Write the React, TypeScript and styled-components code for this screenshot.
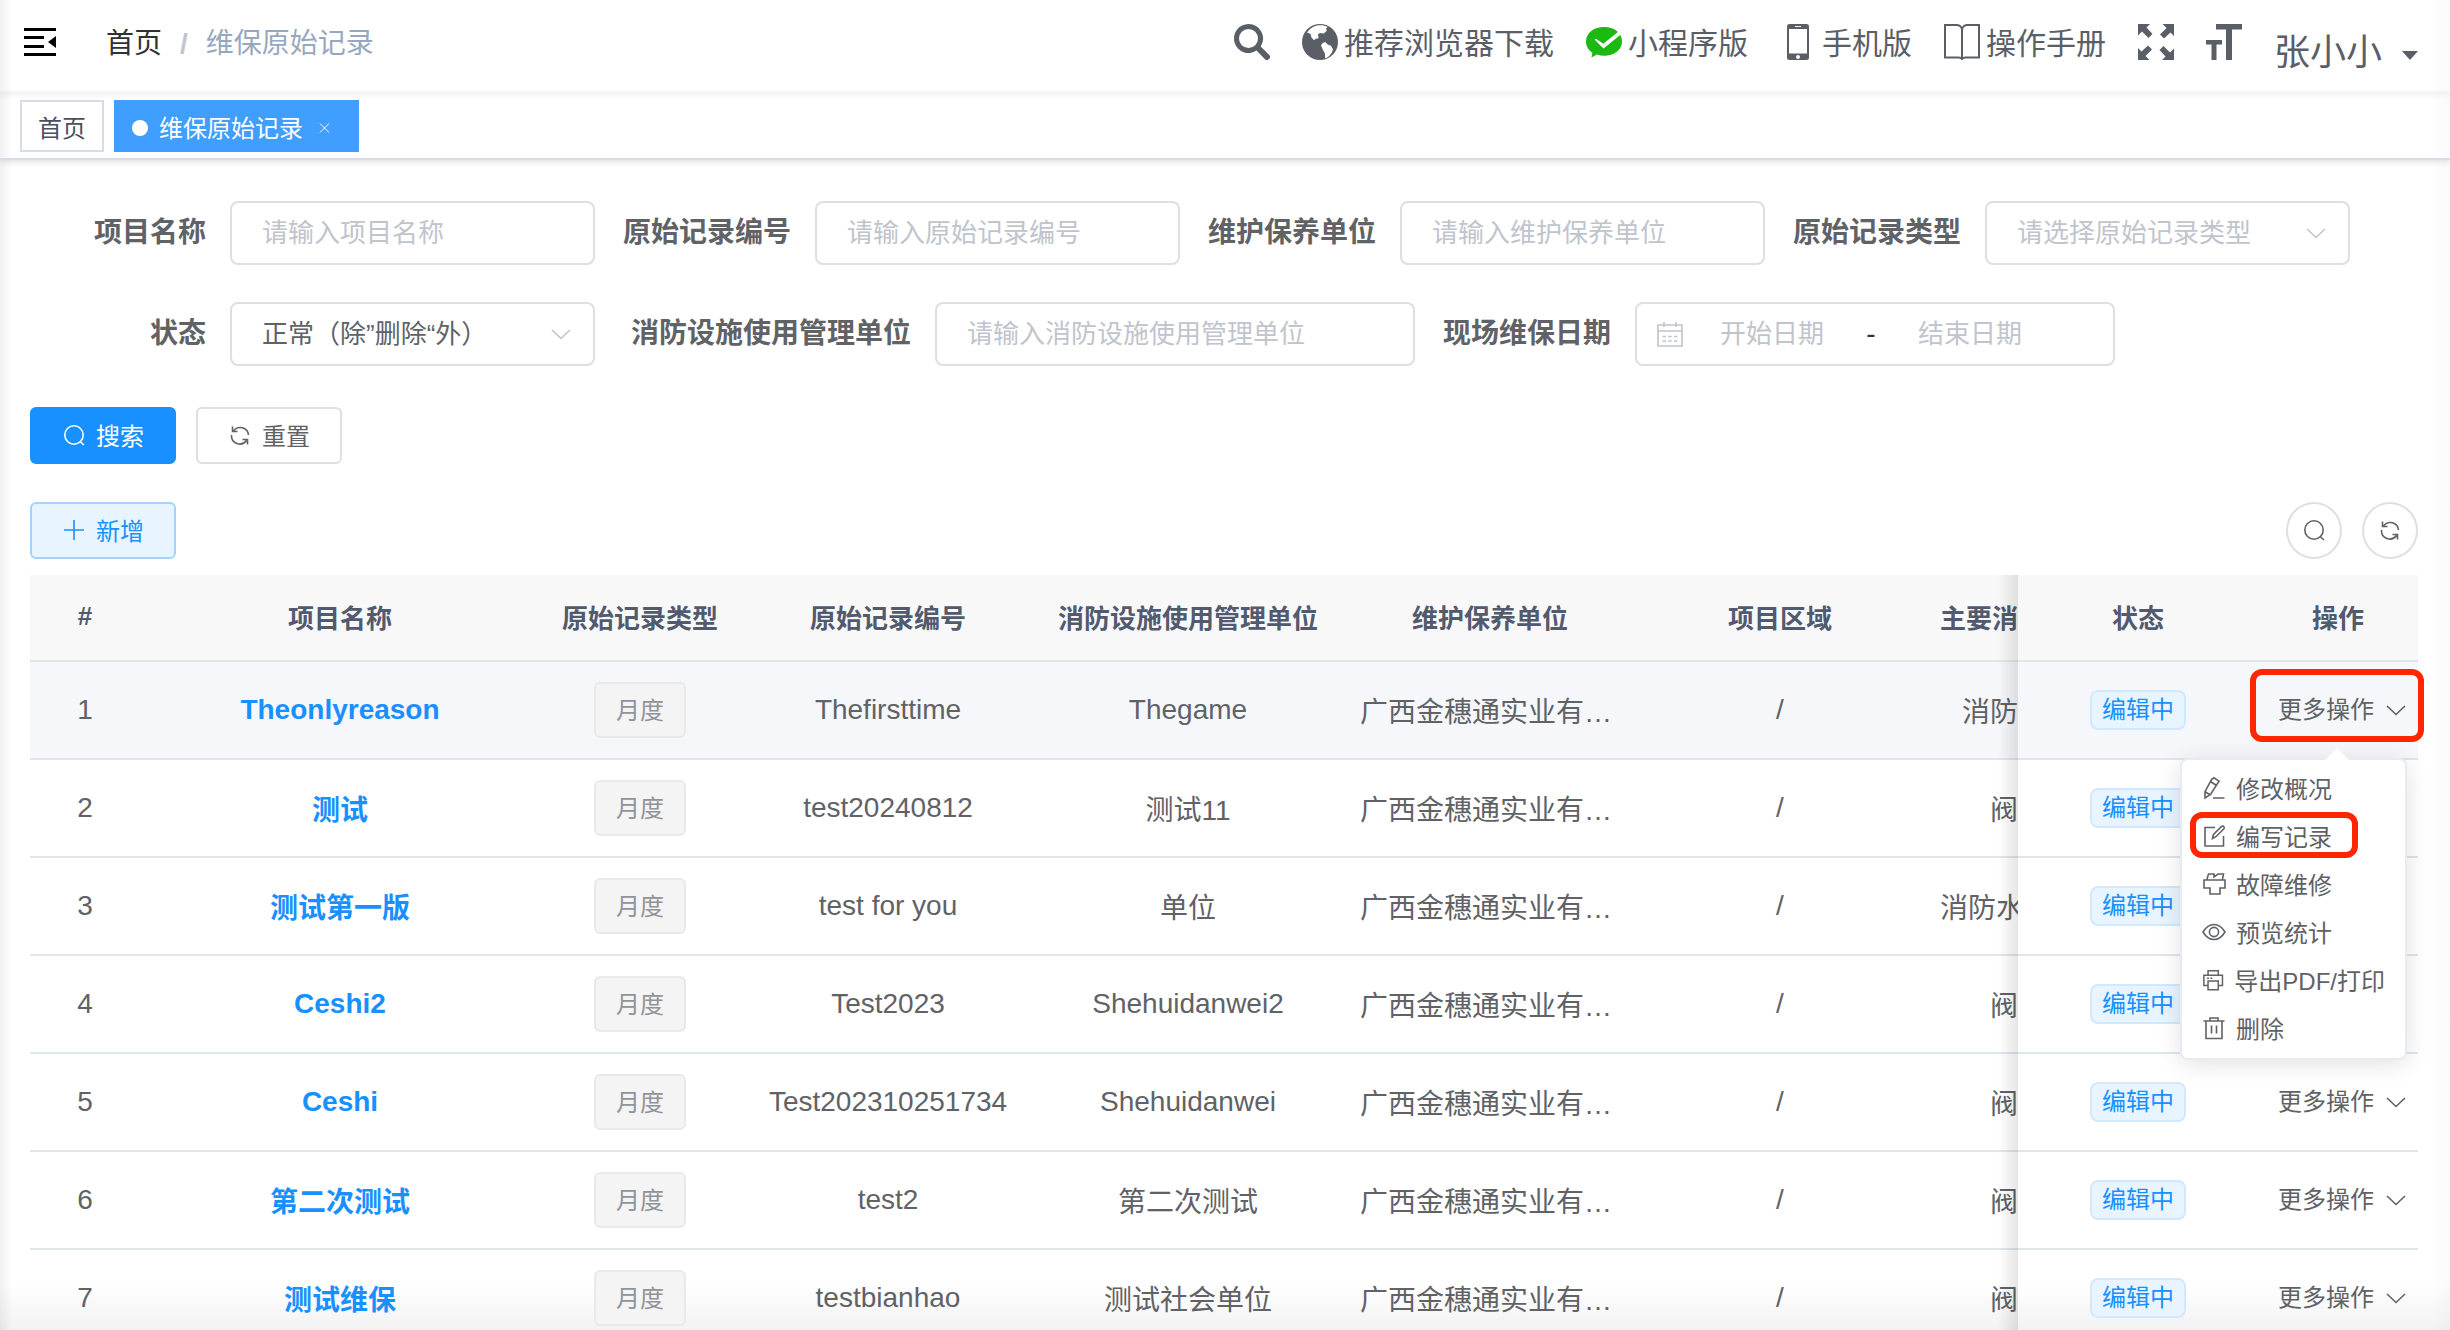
import React from 'react';
import styled, { createGlobalStyle, css } from 'styled-components';

const FONT = '"Liberation Sans", "Noto Sans CJK SC", sans-serif';

const GlobalStyle = createGlobalStyle`
  *, *::before, *::after { box-sizing: border-box; }
  body { margin: 0; background: #fff; color: #606266; font-family: ${FONT}; }
  button, input, select { font-family: inherit; margin: 0; }
`;

const Page = styled.div`
  height: 100vh;
  overflow: hidden;
  background:
    linear-gradient(to right, rgba(0, 0, 0, 0.06), rgba(0, 0, 0, 0) 12px),
    linear-gradient(to left, rgba(0, 0, 0, 0.02), rgba(0, 0, 0, 0) 20px),
    linear-gradient(to top, rgba(0, 0, 0, 0.05), rgba(0, 0, 0, 0) 48px),
    #fff;
`;

const Header = styled.header`
  display: flex;
  justify-content: space-between;
  height: 92px;
  padding: 0 32px 0 24px;
  box-shadow: 0 2px 8px rgba(0, 21, 41, 0.08);
`;

const HeaderLeft = styled.div`
  display: flex;
  align-items: center;
  gap: 50px;
  height: 84px;
`;

const IconButton = styled.button`
  display: flex;
  padding: 0;
  border: 0;
  background: none;
  color: inherit;
  cursor: pointer;
`;

const Breadcrumb = styled.nav`
  display: flex;
  gap: 18px;
  padding-top: 3px;
  font-size: 28px;
  line-height: 40px;
  color: #97a8be;
`;

const CrumbLink = styled.a`
  color: #303133;
  text-decoration: none;
`;

const CrumbDivider = styled.span`
  color: #c0c4cc;
  font-weight: 700;
`;

const HeaderRight = styled.div`
  display: flex;
  align-items: center;
  gap: 32px;
  height: 84px;
  color: #5a5e66;
`;

const HeaderLink = styled.a`
  display: flex;
  align-items: center;
  gap: 6px;
  font-size: 30px;
  line-height: 44px;
  color: inherit;
  text-decoration: none;
`;

const HeaderText = styled.span`
  padding-top: 4px;
`;

const UserMenu = styled.button`
  display: flex;
  align-items: center;
  gap: 20px;
  padding: 22px 0 0;
  border: 0;
  background: none;
  color: inherit;
  font-size: 36px;
  line-height: 40px;
  cursor: pointer;
`;

const Caret = styled.span`
  margin-top: 4px;
  border: 8px solid transparent;
  border-top: 9px solid #5a5e66;
  border-bottom: 0;
`;

const TagBar = styled.nav`
  display: flex;
  gap: 10px;
  height: 68px;
  padding: 8px 20px 0;
  border-bottom: 2px solid #d8dce5;
  box-shadow: 0 2px 6px rgba(0, 0, 0, 0.12);
`;

const PageTag = styled.a<{ $active?: boolean }>`
  display: flex;
  align-items: center;
  height: 52px;
  padding: 0 16px;
  border: 2px solid #d8dce5;
  font-size: 24px;
  color: #495060;
  text-decoration: none;
  ${(p) =>
    p.$active &&
    css`
      padding-right: 24px;
      border-color: #409eff;
      background: #409eff;
      color: #fff;
    `}
`;

const TagDot = styled.span`
  width: 16px;
  height: 16px;
  margin: 4px 11px 0 0;
  border-radius: 50%;
  background: #fff;
`;

const TagClose = styled.span`
  display: flex;
  margin: 4px 0 0 14px;
`;

const Content = styled.main`
  padding: 41px 32px 0 30px;
`;

const FormRow = styled.div`
  display: flex;
  gap: 28px;
  margin-bottom: 37px;
`;

const Field = styled.div`
  display: flex;
  align-items: center;
`;

const Label = styled.label<{ $min?: number }>`
  min-width: ${(p) => p.$min ?? 0}px;
  padding-right: 24px;
  text-align: right;
  font-size: 28px;
  line-height: 64px;
  font-weight: 700;
  white-space: nowrap;
`;

const boxStyle = css`
  height: 64px;
  border: 2px solid #dcdfe6;
  border-radius: 8px;
  background: #fff;
  font-size: 26px;
  color: #606266;
`;

const TextInput = styled.input<{ $wide?: boolean }>`
  ${boxStyle}
  width: ${(p) => (p.$wide ? '480px' : '365px')};
  padding: 0 30px;
  outline: none;
  &::placeholder { color: #c0c4cc; opacity: 1; }
`;

const SelectWrap = styled.div`
  display: grid;
  align-items: center;
  width: 365px;
  color: #c0c4cc;
  & > * { grid-area: 1 / 1; }
  & > svg { justify-self: end; margin-right: 22px; pointer-events: none; }
`;

const SelectBox = styled.select<{ $empty?: boolean }>`
  ${boxStyle}
  width: 100%;
  padding: 0 30px;
  appearance: none;
  color: ${(p) => (p.$empty ? '#c0c4cc' : '#606266')};
`;

const DateRange = styled.div`
  ${boxStyle}
  display: flex;
  align-items: center;
  width: 480px;
  padding: 0 20px;
  & > svg { margin-right: 4px; color: #c0c4cc; }
`;

const DateInput = styled.input`
  width: 170px;
  padding: 0;
  border: 0;
  outline: none;
  background: none;
  text-align: center;
  font-size: 26px;
  &::placeholder { color: #c0c4cc; opacity: 1; }
`;

const DateDash = styled.span`
  width: 28px;
  text-align: center;
  font-size: 28px;
  color: #303133;
`;

const ButtonRow = styled.div`
  display: flex;
  gap: 20px;
  padding-top: 4px;
`;

const Toolbar = styled.div`
  display: flex;
  justify-content: space-between;
  margin: 38px 0 16px;
`;

const ToolGroup = styled.div`
  display: flex;
  gap: 20px;
`;

const tones = {
  primary: css`background: #1890ff; border-color: #1890ff; color: #fff;`,
  plain: css`background: #fff; border-color: #dcdfe6; color: #606266;`,
  soft: css`background: #e8f4ff; border-color: #a3d3ff; color: #1890ff;`,
};

const Button = styled.button<{ $tone: keyof typeof tones }>`
  display: flex;
  align-items: center;
  gap: 10px;
  height: 57px;
  padding: 0 30px 2px;
  border: 2px solid;
  border-radius: 6px;
  font-size: 24px;
  cursor: pointer;
  ${(p) => tones[p.$tone]}
`;

const RoundButton = styled.button`
  display: flex;
  align-items: center;
  justify-content: center;
  width: 56px;
  height: 57px;
  padding: 0 0 2px;
  border: 2px solid #dcdfe6;
  border-radius: 50%;
  background: #fff;
  color: #606266;
  cursor: pointer;
`;

const Table = styled.table`
  width: 100%;
  table-layout: fixed;
  border-collapse: separate;
  border-spacing: 0;
`;

const Th = styled.th`
  height: 87px;
  padding: 0 0 3px;
  border-bottom: 2px solid #dfe6ec;
  background: #f8f8f9;
  font-size: 26px;
  color: #515a6e;
  white-space: nowrap;
`;

const Td = styled.td<{ $hover?: boolean; $start?: boolean }>`
  height: 98px;
  padding: ${(p) => (p.$start ? '0 0 0 20px' : '0')};
  border-bottom: 2px solid #dfe6ec;
  background: ${(p) => (p.$hover ? '#f5f7fa' : 'transparent')};
  text-align: ${(p) => (p.$start ? 'left' : 'center')};
  font-size: 28px;
  white-space: nowrap;
`;

const fixedEdge = css`
  position: relative;
  &::before {
    content: '';
    position: absolute;
    top: 0;
    bottom: -2px;
    left: -20px;
    width: 20px;
    background: linear-gradient(to left, rgba(0, 0, 0, 0.1), rgba(0, 0, 0, 0));
  }
`;

const FixedTh = styled(Th)`${fixedEdge}`;
const FixedTd = styled(Td)`${fixedEdge}`;

const Clipped = styled.div`
  width: fit-content;
  max-width: 78px;
  margin-left: auto;
  overflow: hidden;
`;

const ProjectLink = styled.a`
  color: #1890ff;
  font-weight: 700;
  text-decoration: none;
`;

const TypeButton = styled.button`
  display: block;
  height: 56px;
  margin: 0 auto;
  padding: 0 20px 3px;
  border: 2px solid #e9e9eb;
  border-radius: 6px;
  background: #f4f4f5;
  color: #909399;
  font-size: 24px;
`;

const StatusTag = styled.span`
  display: block;
  width: fit-content;
  height: 40px;
  margin: 0 auto;
  padding: 0 10px;
  border: 2px solid #d1e9ff;
  border-radius: 8px;
  background: #e8f4ff;
  color: #1890ff;
  font-size: 24px;
  line-height: 36px;
`;

const MoreWrap = styled.div`
  position: relative;
  display: flex;
  justify-content: center;
  padding-left: 10px;
`;

const MoreButton = styled.button`
  display: flex;
  align-items: center;
  gap: 10px;
  padding: 0;
  border: 0;
  background: none;
  color: #606266;
  font-size: 24px;
  line-height: 36px;
  cursor: pointer;
`;

const mark = css`
  content: '';
  position: absolute;
  border: 6px solid #ff2600;
  border-radius: 12px;
  pointer-events: none;
`;

const MarkedMore = styled(MoreWrap)`
  &::after {
    ${mark}
    top: -23px;
    left: -8px;
    right: -6px;
    height: 73px;
  }
`;

const Menu = styled.ul`
  position: absolute;
  z-index: 5;
  top: 66px;
  right: 11px;
  width: 227px;
  margin: 0;
  padding: 5px 0;
  border: 2px solid #e6ebf5;
  border-radius: 8px;
  background: #fff;
  box-shadow: 0 4px 24px rgba(0, 0, 0, 0.12);
  list-style: none;
  &::before {
    content: '';
    position: absolute;
    top: -12px;
    left: 143px;
    border: 12px solid transparent;
    border-top: 0;
    border-bottom-color: #fff;
  }
`;

const MenuItem = styled.li<{ $marked?: boolean }>`
  position: relative;
  ${(p) =>
    p.$marked &&
    css`
      &::after {
        ${mark}
        top: -1px;
        left: 8px;
        width: 168px;
        height: 46px;
      }
    `}
`;

const MenuButton = styled.button`
  display: flex;
  align-items: center;
  gap: 10px;
  width: 100%;
  height: 48px;
  padding: 0 20px 3px;
  border: 0;
  background: none;
  color: #606266;
  font-size: 24px;
  white-space: nowrap;
  cursor: pointer;
`;

type LineProps = { size: number; box?: number; width?: number; children: React.ReactNode };
const Line = ({ size, box = 24, width = 1.6, children }: LineProps) => (
  <svg width={size} height={size} viewBox={`0 0 ${box} ${box}`} fill="none" stroke="currentColor" strokeWidth={width} aria-hidden="true">
    {children}
  </svg>
);

const Solid = ({ children }: { children: React.ReactNode }) => (
  <svg width="36" height="36" viewBox="0 0 36 36" fill="currentColor" aria-hidden="true">{children}</svg>
);

const FoldIcon = () => (
  <svg width="32" height="28" viewBox="0 0 32 28" fill="#000" aria-hidden="true">
    <path d="M0 0h32v3H0zM0 8h20v3H0zM0 17h20v3H0zM0 25h32v3H0zM32 8v12l-8-6z" />
  </svg>
);
const SearchBold = () => (
  <Solid>
    <path fillRule="evenodd" d="M14.500 0a14.500 14.500 0 1 0 8 26.600l8.200 8.400a3 3 0 0 0 4.400-4.200l-8.400-8.400A14.500 14.500 0 0 0 14.500 0zm0 5a9.500 9.500 0 1 1 0 19 9.500 9.500 0 0 1 0-19z" />
  </Solid>
);
const GlobeIcon = () => (
  <Solid>
    <circle cx="18" cy="18" r="18" />
    <path fill="#fff" d="M5 8.500C9 3 14 1.200 18.500 1.200c3 0 5 .6 7 1.600l-1.500 2 .8 2-3 2.600-4-.4-1.800 1.600.6 3.600-3 .6-1.400 1.400-2.600-2.400-1.200-4z" />
    <path fill="#fff" d="M19 21.500c1-2.500 3-3.500 4.600-3.200l2 2.200 3.400 1.200 2 3.800c-1 4-3.600 7.300-7.800 9l-.4-5.500-1.600-2.500z" />
  </Solid>
);
const MiniAppIcon = () => (
  <Solid>
    <path fill="#1aba12" d="M18 3C7.800 3 0 9 0 17.500c0 4.800 2.400 8.600 6.400 11.200L5.400 33.600l5.600-3a22 22 0 0 0 7 1.200c10.200 0 18-6 18-14.300 0-2.400-.6-4.600-1.800-6.500L17.500 24.500 8.500 15.500l1.600-.8 7.200 5L32 8C28.600 4.800 23.600 3 18 3z" />
  </Solid>
);
const PhoneIcon = () => (
  <Solid>
    <path fillRule="evenodd" d="M9.500 0h17a2.500 2.500 0 0 1 2.500 2.500v31a2.500 2.500 0 0 1-2.500 2.500h-17A2.500 2.500 0 0 1 7 33.500v-31A2.500 2.500 0 0 1 9.500 0zM9 5v24.500h18V5zM15 2v1h6V2zM18 31a2 2 0 1 0 0 4 2 2 0 0 0 0-4z" />
  </Solid>
);
const BookIcon = () => (
  <Line size={36} box={36} width={2}>
    <path d="M18 5c-1-3-3-4-5.500-4H1v32.500h13.500c2 0 3 .5 3.500 1.500.5-1 1.500-1.500 3.500-1.500H35V1H23.500C21 1 19 2 18 5zM18 5v30" />
  </Line>
);
const ExpandIcon = () => (
  <Solid>
    {[0, 90, 180, 270].map((a) => (
      <path key={a} transform={`rotate(${a} 18 18)`} d="M0 0h12L8.500 3.500l6 6.500-4 4L4 7.500 0 11.500z" />
    ))}
  </Solid>
);
const SizeIcon = () => (
  <Solid><path d="M10 0h26v5.500H26V36h-6V5.500H10zM0 16h16v4.500h-5.500V36H5.500V20.500H0z" /></Solid>
);
const SearchIcon = () => (
  <Line size={24}><circle cx="12" cy="12" r="9.200" /><path d="M18 18.500l4 3.500" /></Line>
);
const RefreshIcon = () => (
  <Line size={24}>
    <path d="M5.500 8A8.300 8.300 0 0 1 20.500 12M3.500 12A8.300 8.300 0 0 0 18.500 17.500M4.500 3.500v5h5M19.500 21.500v-5h-5" />
  </Line>
);
const PlusIcon = () => <Line size={24}><path d="M12 2v20M2 12h20" /></Line>;
const ChevronIcon = () => <Line size={24}><path d="M3 8l9 8.500L21 8" /></Line>;
const CloseIcon = () => <Line size={16} box={16} width={1}><path d="M3 3.500l9 9M12 3.500l-9 9" /></Line>;
const CalendarIcon = () => (
  <Line size={26} box={26}>
    <path d="M1 4h24v21H1zM1 10h24M7 1v5M19 1v5" />
    <path d="M5.500 15.500h15M5.500 20h15" strokeDasharray="3.500 2.200" />
  </Line>
);

const EditIcon = () => <Line size={24}><path d="M9.500 3.500L12 1.800l5 3.400-8.500 13.300L3 22v-6.300zM8.500 5.500l6 4M3.500 16l5 3M11 22h11.500" /></Line>;
const WriteIcon = () => <Line size={24}><path d="M13 3.500H3V22h18.500V12M10.500 14.500l1-4 8-8c2-1.200 3.300.6 2.400 2.200l-8 8z" /></Line>;
const RepairIcon = () => <Line size={24}><path d="M5 7l1.500-5H12v3l4-3h5.500l-1 5M2 8h21v8h-5v6H8v-6H2zM5 7v1M20.500 7v1" /></Line>;
const EyeIcon = () => <Line size={24}><path d="M1 12c3-5 7-7.500 11-7.500S20 7 23 12c-3 5-7 7.500-11 7.500S4 17 1 12z" /><circle cx="12" cy="12" r="4.600" /></Line>;
const PrintIcon = () => <Line size={24}><path d="M6.500 7V2h11v5M6.500 18H2V7h20v11h-4.500M6.500 13h11v9.500h-11zM5.500 10h2M9 10h2" /></Line>;
const TrashIcon = () => <Line size={24}><path d="M1.500 5h21M4 5v17.500h16V5M8 5V2h8v3M9.500 9.500v8M14.500 9.500v8" /></Line>;

const columns = ['#', '项目名称', '原始记录类型', '原始记录编号', '消防设施使用管理单位', '维护保养单位', '项目区域'];
const widths = ['110px', 'auto', '200px', '296px', '304px', '300px', '280px', '98px', '240px', '160px'];

const rows = [
  { name: 'Theonlyreason', code: 'Thefirsttime', unit: 'Thegame', facility: '消防' },
  { name: '测试', code: 'test20240812', unit: '测试11', facility: '阀' },
  { name: '测试第一版', code: 'test for you', unit: '单位', facility: '消防水' },
  { name: 'Ceshi2', code: 'Test2023', unit: 'Shehuidanwei2', facility: '阀' },
  { name: 'Ceshi', code: 'Test202310251734', unit: 'Shehuidanwei', facility: '阀' },
  { name: '第二次测试', code: 'test2', unit: '第二次测试', facility: '阀' },
  { name: '测试维保', code: 'testbianhao', unit: '测试社会单位', facility: '阀' },
];

const actions = [
  { text: '修改概况', icon: <EditIcon /> },
  { text: '编写记录', icon: <WriteIcon />, marked: true },
  { text: '故障维修', icon: <RepairIcon /> },
  { text: '预览统计', icon: <EyeIcon /> },
  { text: '导出PDF/打印', icon: <PrintIcon /> },
  { text: '删除', icon: <TrashIcon /> },
];

const links = [
  { text: '推荐浏览器下载', icon: <GlobeIcon /> },
  { text: '小程序版', icon: <MiniAppIcon /> },
  { text: '手机版', icon: <PhoneIcon /> },
  { text: '操作手册', icon: <BookIcon /> },
];

const TopBar = () => (
  <Header>
    <HeaderLeft>
      <IconButton aria-label="收起菜单"><FoldIcon /></IconButton>
      <Breadcrumb>
        <CrumbLink href="#home">首页</CrumbLink>
        <CrumbDivider>/</CrumbDivider>
        <span>维保原始记录</span>
      </Breadcrumb>
    </HeaderLeft>
    <HeaderRight>
      <IconButton aria-label="搜索菜单"><SearchBold /></IconButton>
      {links.map((l) => (
        <HeaderLink key={l.text} href="#link">{l.icon}<HeaderText>{l.text}</HeaderText></HeaderLink>
      ))}
      <IconButton aria-label="全屏"><ExpandIcon /></IconButton>
      <IconButton aria-label="字号"><SizeIcon /></IconButton>
      <UserMenu>张小小<Caret /></UserMenu>
    </HeaderRight>
  </Header>
);

const Filters = () => (
  <form onSubmit={(e) => e.preventDefault()}>
    <FormRow>
      <Field><Label $min={200} htmlFor="project">项目名称</Label><TextInput id="project" placeholder="请输入项目名称" /></Field>
      <Field><Label htmlFor="code">原始记录编号</Label><TextInput id="code" placeholder="请输入原始记录编号" /></Field>
      <Field><Label htmlFor="company">维护保养单位</Label><TextInput id="company" placeholder="请输入维护保养单位" /></Field>
      <Field>
        <Label htmlFor="type">原始记录类型</Label>
        <SelectWrap>
          <SelectBox id="type" $empty defaultValue=""><option value="">请选择原始记录类型</option></SelectBox>
          <ChevronIcon />
        </SelectWrap>
      </Field>
    </FormRow>
    <FormRow>
      <Field>
        <Label $min={200} htmlFor="status">状态</Label>
        <SelectWrap>
          <SelectBox id="status"><option>正常（除”删除“外）</option></SelectBox>
          <ChevronIcon />
        </SelectWrap>
      </Field>
      <Field><Label $min={312} htmlFor="manager">消防设施使用管理单位</Label><TextInput $wide id="manager" placeholder="请输入消防设施使用管理单位" /></Field>
      <Field>
        <Label htmlFor="start">现场维保日期</Label>
        <DateRange>
          <CalendarIcon />
          <DateInput id="start" placeholder="开始日期" />
          <DateDash>-</DateDash>
          <DateInput aria-label="结束日期" placeholder="结束日期" />
        </DateRange>
      </Field>
    </FormRow>
    <ButtonRow>
      <Button $tone="primary" type="submit"><SearchIcon />搜索</Button>
      <Button $tone="plain" type="reset"><RefreshIcon />重置</Button>
    </ButtonRow>
  </form>
);

const ActionMenu = () => (
  <Menu>
    {actions.map((a) => (
      <MenuItem key={a.text} $marked={a.marked}>
        <MenuButton>{a.icon}{a.text}</MenuButton>
      </MenuItem>
    ))}
  </Menu>
);

const Records = () => (
  <Table>
    <colgroup>{widths.map((w, i) => <col key={i} style={{ width: w }} />)}</colgroup>
    <thead>
      <tr>
        {columns.map((c) => <Th key={c}>{c}</Th>)}
        <Th><Clipped>主要消</Clipped></Th>
        <FixedTh>状态</FixedTh>
        <Th>操作</Th>
      </tr>
    </thead>
    <tbody>
      {rows.map((r, i) => {
        const open = i === 0;
        const Wrap = open ? MarkedMore : MoreWrap;
        return (
          <tr key={r.name}>
            <Td $hover={open}>{i + 1}</Td>
            <Td $hover={open}><ProjectLink href="#record">{r.name}</ProjectLink></Td>
            <Td $hover={open}><TypeButton>月度</TypeButton></Td>
            <Td $hover={open}>{r.code}</Td>
            <Td $hover={open}>{r.unit}</Td>
            <Td $hover={open} $start>广西金穗通实业有…</Td>
            <Td $hover={open}>/</Td>
            <Td $hover={open}><Clipped>{r.facility}</Clipped></Td>
            <FixedTd $hover={open}><StatusTag>编辑中</StatusTag></FixedTd>
            <Td $hover={open}>
              <Wrap>
                <MoreButton>更多操作<ChevronIcon /></MoreButton>
                {open && <ActionMenu />}
              </Wrap>
            </Td>
          </tr>
        );
      })}
    </tbody>
  </Table>
);

export default function App() {
  return (
    <Page>
      <GlobalStyle />
      <TopBar />
      <TagBar>
        <PageTag href="#home">首页</PageTag>
        <PageTag $active href="#records">
          <TagDot />维保原始记录<TagClose><CloseIcon /></TagClose>
        </PageTag>
      </TagBar>
      <Content>
        <Filters />
        <Toolbar>
          <Button $tone="soft"><PlusIcon />新增</Button>
          <ToolGroup>
            <RoundButton aria-label="隐藏搜索"><SearchIcon /></RoundButton>
            <RoundButton aria-label="刷新"><RefreshIcon /></RoundButton>
          </ToolGroup>
        </Toolbar>
        <Records />
      </Content>
    </Page>
  );
}
